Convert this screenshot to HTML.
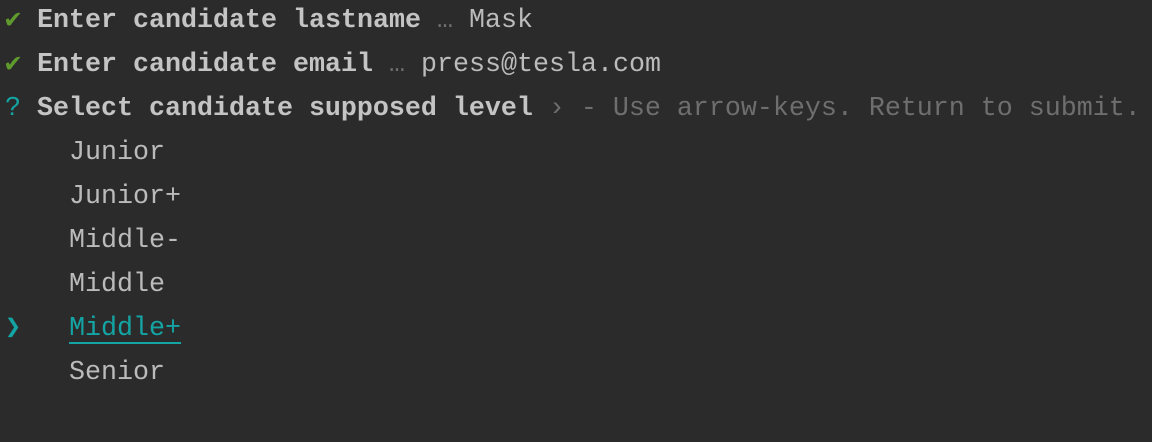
<!DOCTYPE html>
<html><head><meta charset="utf-8"><style>
html,body{margin:0;padding:0;background:#2b2b2b;width:1152px;height:442px;overflow:hidden}
.t{position:absolute;left:5px;top:-1px;font-family:"Liberation Mono",monospace;font-size:26.67px;line-height:44px;color:#bbbbbb;white-space:pre}
.b{font-weight:bold;color:#c4c4c4}
.g{color:#5f9a2d}
.c{color:#14a4a4}
.d{color:#6e6e6e}
.sel{color:#14a4a4;text-decoration:underline;text-underline-offset:7px;text-decoration-thickness:2px}
</style></head><body>
<div class="t"><span class="g">✔</span> <span class="b">Enter candidate lastname</span> <span class="d">…</span> Mask
<span class="g">✔</span> <span class="b">Enter candidate email</span> <span class="d">…</span> press@tesla.com
<span class="c">?</span> <span class="b">Select candidate supposed level</span> <span class="d">› - Use arrow-keys. Return to submit.</span>
    Junior
    Junior+
    Middle-
    Middle
<span class="c">❯</span>   <span class="sel">Middle+</span>
    Senior</div>
</body></html>
